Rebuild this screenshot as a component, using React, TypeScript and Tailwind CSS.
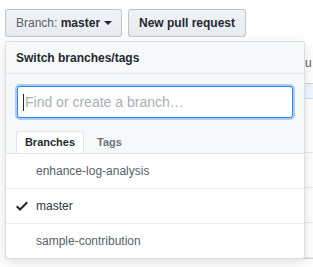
const branches = [
  { name: 'enhance-log-analysis', current: false },
  { name: 'master', current: true },
  { name: 'sample-contribution', current: false },
];

const Caret = () => (
  <span className="inline-block ml-[4px] w-0 h-0 border-x-[4px] border-t-[4px] border-x-transparent border-t-[#24292e] align-middle" />
);

const Check = () => (
  <svg width="12" height="16" viewBox="0 0 12 16" className="fill-[#24292e]">
    <path fillRule="evenodd" d="M12 5l-8 8-4-4 1.5-1.5L4 10l6.5-6.5L12 5z" />
  </svg>
);

const BranchMenu = () => {
  return (
    <div className="absolute left-[5px] top-[41px] w-[300px] bg-white border border-[#1b1f2326] rounded-[3px] shadow-[0_3px_12px_rgba(27,31,35,0.15)] overflow-hidden">
      <header className="h-[32px] flex items-center pl-[10px] bg-[#f6f8fa] border-b border-[#e1e4e8]">
        <span className="text-[12px] font-bold text-[#24292e]">Switch branches/tags</span>
      </header>
      <div className="bg-[#f6f8fa]">
        <div className="pt-[12px] px-[11px]">
          <div className="h-[32px] flex items-center pl-[5px] bg-white border border-[#2188ff] rounded-[3px] shadow-[0_0_0_2px_rgba(3,102,214,0.3)]">
            <span className="w-px h-[17px] bg-[#24292e] mr-px" />
            <span className="text-[14px] text-[#a8aeb4]">Find or create a branch…</span>
          </div>
        </div>
        <nav className="mt-[13px] pl-[10px] flex border-b border-[#e1e4e8]">
          <div className="w-[68px] h-[22px] -mb-px flex items-center justify-center bg-white border border-b-0 border-[#e1e4e8] rounded-t-[3px] text-[11px] font-bold text-[#24292e]">
            Branches
          </div>
          <div className="h-[22px] flex items-center pl-[13px] text-[11px] font-bold text-[#6a737d]">
            Tags
          </div>
        </nav>
      </div>
      <ul>
        {branches.map((b, i) => (
          <li
            key={b.name}
            className={
              i < branches.length - 1
                ? 'h-[35px] flex items-center border-b border-[#eaecef]'
                : 'h-[34px] flex items-center'
            }
          >
            <span className="w-[30px] pl-[10px] flex items-center">{b.current && <Check />}</span>
            <span className={b.current ? 'text-[12px] text-[#2f363d]' : 'text-[12px] text-[#586069]'}>
              {b.name}
            </span>
          </li>
        ))}
      </ul>
    </div>
  );
};

export default function App() {
  return (
    <div className="relative w-[313px] h-[267px] overflow-hidden bg-white font-['Liberation_Sans',Arial,sans-serif]">
      <div className="flex gap-[6px] pt-[9px] pl-[5px]">
        <button className="w-[117px] h-[28px] flex items-center pl-[10px] rounded-[3px] border border-[#1b1f2333] bg-linear-to-b from-[#eff3f6] to-[#e6ebf1] text-[12px]">
          <span className="text-[#586069]">Branch:&nbsp;</span>
          <span className="font-bold text-[#24292e]">master</span>
          <Caret />
        </button>
        <button className="w-[118px] h-[28px] flex items-center justify-center rounded-[3px] border border-[#1b1f2333] bg-linear-to-b from-[#eff3f6] to-[#e6ebf1] text-[12px] font-bold text-[#24292e]">
          New pull request
        </button>
      </div>

      {/* page content behind the menu */}
      <div className="pl-[305px] mt-[17px] text-[12px] text-[#586069]">u</div>
      <div className="ml-[5px] mt-[11px] w-[360px] border border-[#d1d5da] rounded-[3px]">
        <div className="h-[15px] bg-[#f1f8ff] border-b border-[#c8e1ff]" />
        <div className="h-[54px] border-b border-[#eaecef]" />
        <div className="h-[35px] border-b border-[#eaecef]" />
        <div className="h-[35px] border-b border-[#eaecef]" />
        <div className="h-[35px] border-b border-[#eaecef]" />
      </div>

      <BranchMenu />
    </div>
  );
}
